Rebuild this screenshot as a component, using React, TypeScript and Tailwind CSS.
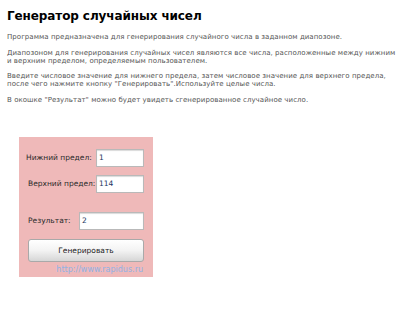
import React from "react";

export default function App() {
  const font = { fontFamily: '"DejaVu Sans", Verdana, sans-serif' };
  return (
    <div className="w-[400px] h-[316px] bg-white overflow-hidden" style={font}>
      <div className="pl-[7px] pt-[8px]">
        <h1 className="text-[12px] leading-[16px] font-bold text-black whitespace-nowrap tracking-[-0.1px]">
          Генератор случайных чисел
        </h1>
        <div className="text-[7px] leading-[8px] text-[#555555] whitespace-nowrap tracking-[0.05px]">
          <p className="mt-[9px]">
            Программа предназначена для генерирования случайного числа в заданном диапозоне.
          </p>
          <p className="mt-[8px]">
            Диапозоном для генерирования случайных чисел являются все числа, расположенные между нижним
            <br />и верхним пределом, определяемым пользователем.
          </p>
          <p className="mt-[7px]">
            Введите числовое значение для нижнего предела, затем числовое значение для верхнего предела,
            <br />
            после чего нажмите кнопку "Генерировать".Используйте целые числа.
          </p>
          <p className="mt-[8px]">
            В окошке "Результат" можно будет увидеть сгенерированное случайное число.
          </p>
        </div>
      </div>

      <div className="ml-[19px] mt-[33px] w-[134px] h-[140px] bg-[#efb9b9] pt-[12px] pr-[9px] flex flex-col text-[7.5px] text-[#2a2a2a] whitespace-nowrap">
        <div className="flex items-center h-[18px]">
          <span className="ml-[7px]">Нижний предел:</span>
          <div className="ml-auto w-[48px] h-[18px] bg-white border border-[#b9b9b9] shadow-[inset_0_1px_1px_rgba(0,0,0,0.15)] flex items-center pl-[2px] text-[#1c3560]">
            1
          </div>
        </div>
        <div className="flex items-center h-[18px] mt-[8px]">
          <span className="ml-[9px]">Верхний предел:</span>
          <div className="ml-auto w-[48px] h-[18px] bg-white border border-[#b9b9b9] shadow-[inset_0_1px_1px_rgba(0,0,0,0.15)] flex items-center pl-[2px] text-[#1c3560]">
            114
          </div>
        </div>
        <div className="flex items-center h-[18px] mt-[19px]">
          <span className="ml-[9px]">Результат:</span>
          <div className="ml-auto w-[65px] h-[18px] bg-white border border-[#b9b9b9] shadow-[inset_0_1px_1px_rgba(0,0,0,0.15)] flex items-center pl-[2px] text-[#1c3560]">
            2
          </div>
        </div>
        <div className="mt-[9px] ml-[9px] h-[23px] flex items-center justify-center rounded-[3px] border border-[#a9a9a9] bg-gradient-to-b from-white via-[#f3f3f3] to-[#d6d6d6] text-[#222222]">
          Генерировать
        </div>
        <div className="mt-[3px] text-right pr-[1px] text-[8px] leading-[10px] text-[#8fb2e4]">
          http://www.rapidus.ru
        </div>
      </div>
    </div>
  );
}
